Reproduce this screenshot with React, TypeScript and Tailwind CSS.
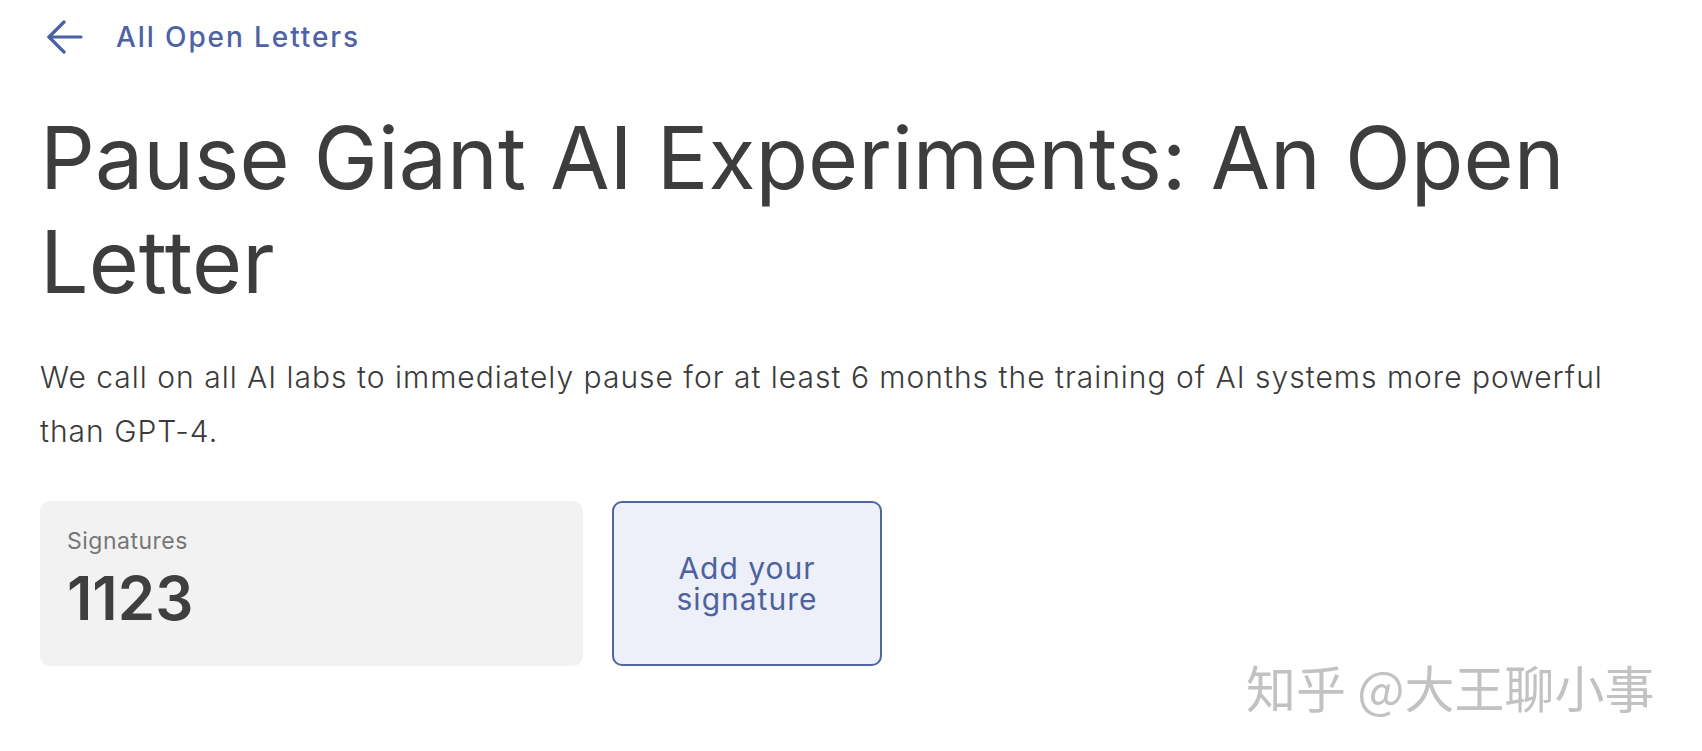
import React from "react";

export default function App() {
  return (
    <div className="relative min-h-screen w-full bg-white" style={{ fontFamily: "Inter, 'Noto Sans CJK SC', sans-serif" }}>
      <div className="pl-[40px] pr-[40px]">
        <div className="flex items-center h-[74px]">
          <svg width="36" height="34" viewBox="0 0 36 34" className="ml-[7px] text-[#4a62a4]" fill="none" stroke="currentColor" strokeWidth="3.2" strokeLinecap="round" strokeLinejoin="round">
            <path d="M2 17 H34" />
            <path d="M17 2 L2 17 L17 32" />
          </svg>
          <span className="ml-[33px] text-[28px] font-medium text-[#4d63a5] leading-none tracking-[1.9px]">All Open Letters</span>
        </div>
        <h1 className="mt-[32px] text-[86px] leading-[104px] font-normal text-[#3d3d3d]">
          Pause Giant AI Experiments: An Open Letter
        </h1>
        <p className="mt-[36px] text-[30px] leading-[54px] font-light text-[#3a3a3a] tracking-[1px] max-w-[1590px]">
          We call on all AI labs to immediately pause for at least 6 months the training of AI systems more powerful than GPT-4.
        </p>
        <div className="mt-[43px] flex gap-[29px]">
          <div className="w-[543px] h-[165px] rounded-[10px] bg-[#f2f2f2] px-[27px] pt-[29px]">
            <div className="text-[23px] text-[#777777] font-normal leading-none tracking-[0.5px]">Signatures</div>
            <div className="mt-[15px] text-[60px] font-semibold text-[#3f3f3f] leading-none">1123</div>
          </div>
          <button className="w-[270px] h-[165px] rounded-[10px] border-2 border-[#4f66a0] bg-[#edf0f8] flex items-center justify-center text-center text-[30px] leading-[31px] text-[#4e629d] font-normal tracking-[1px]">
            Add your<br />signature
          </button>
        </div>
      </div>
      <div
        className="absolute left-[1246px] top-[661px] text-[50px] leading-none text-[#c2c2c2] whitespace-nowrap select-none"
        style={{ fontFamily: "'Noto Sans CJK SC', sans-serif", textShadow: "1px 1px 0 #ffffff, -1px -1px 0 #ffffff" }}
      >
        知乎 @大王聊小事
      </div>
    </div>
  );
}
